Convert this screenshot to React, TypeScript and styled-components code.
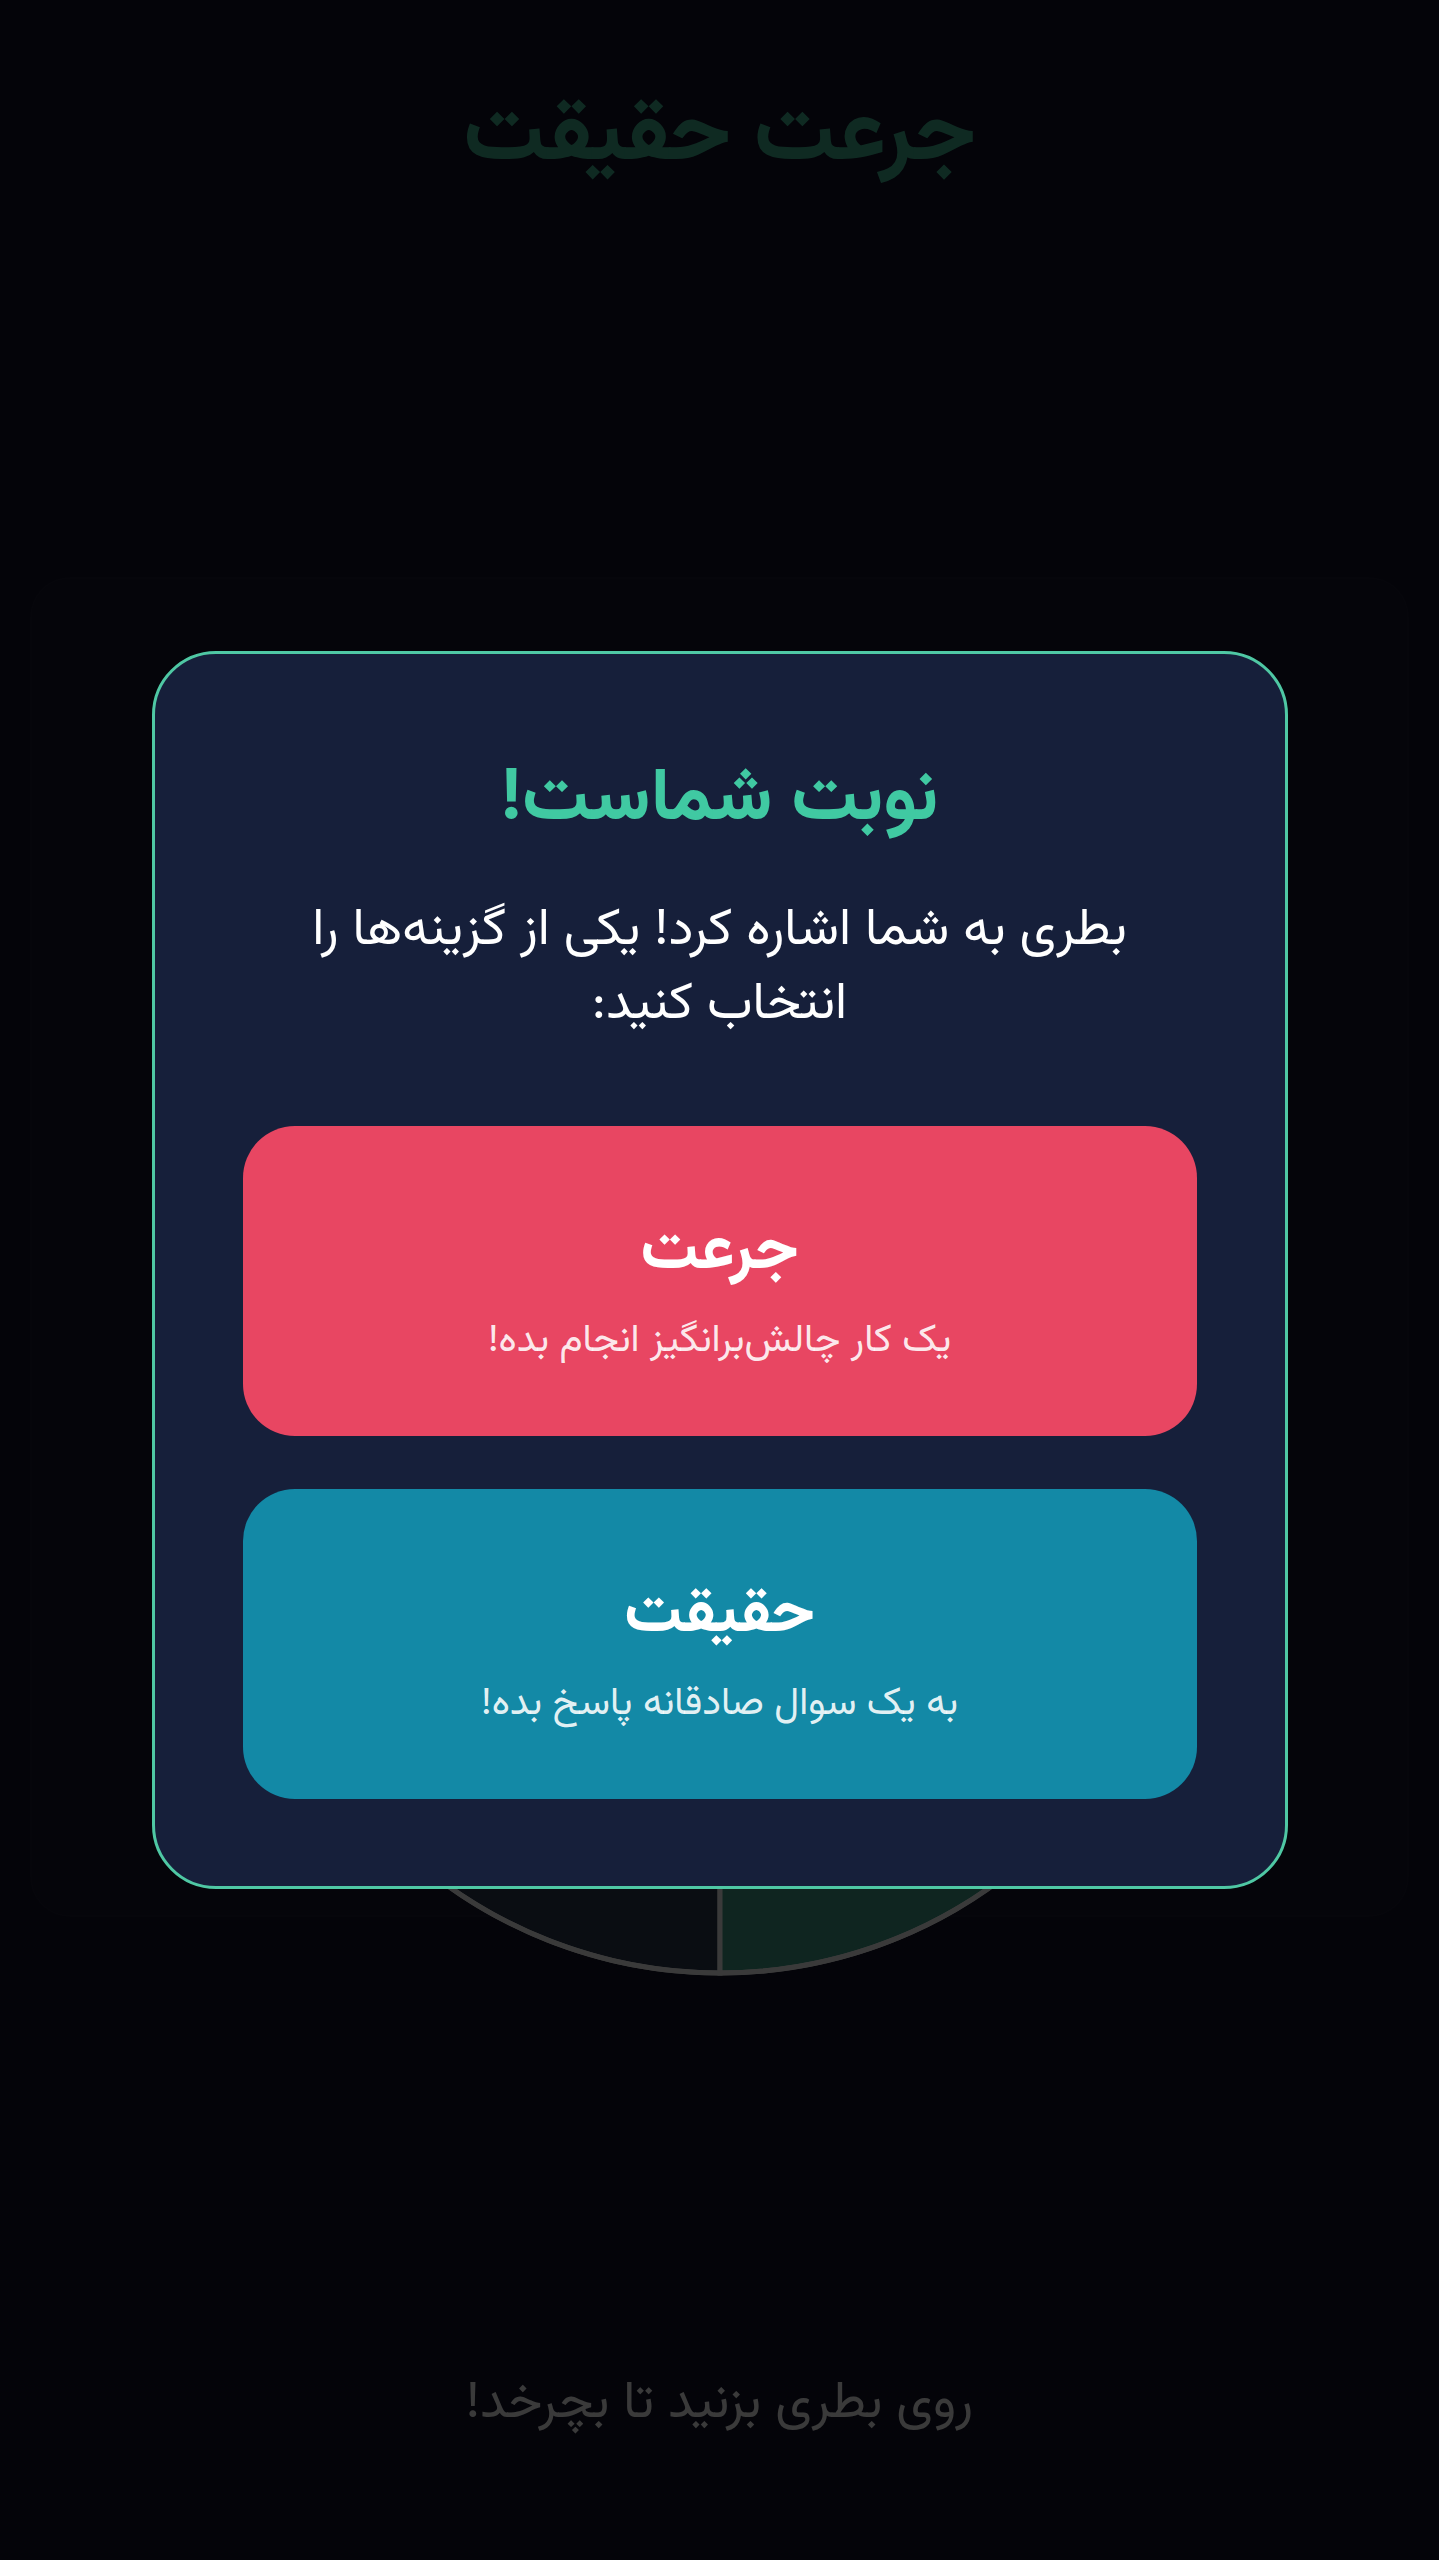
import styled, { createGlobalStyle } from "styled-components";

const GlobalStyle = createGlobalStyle`
  * { box-sizing: border-box; }
  html, body {
    margin: 0;
    padding: 0;
    background: #101024;
  }
  body {
    direction: rtl;
    font-family: "Vazirmatn", "Noto Sans Arabic", "Noto Sans", "DejaVu Sans", sans-serif;
  }
`;

const SLICES = 6;

function Wheel() {
  const r = 468;
  const c = 472;
  const paths = Array.from({ length: SLICES }, (_, i) => {
    const a0 = (i / SLICES) * Math.PI * 2 + Math.PI / 2;
    const a1 = ((i + 1) / SLICES) * Math.PI * 2 + Math.PI / 2;
    const x0 = c + r * Math.cos(a0);
    const y0 = c + r * Math.sin(a0);
    const x1 = c + r * Math.cos(a1);
    const y1 = c + r * Math.sin(a1);
    return (
      <path
        key={i}
        d={`M${c} ${c} L${x0} ${y0} A${r} ${r} 0 0 1 ${x1} ${y1} Z`}
        fill={i % 2 === 0 ? "#283448" : "#3c9480"}
        stroke="#e8e8e8"
        strokeWidth={5}
      />
    );
  });
  return (
    <WheelSvg viewBox="0 0 944 944" width={944} height={944}>
      {paths}
      <circle cx={c} cy={c} r={r} fill="none" stroke="#e8e8e8" strokeWidth={5} />
    </WheelSvg>
  );
}

export default function App() {
  return (
    <>
      <GlobalStyle />
      <Page>
        <Title>جرعت حقیقت</Title>
        <Stage>
          <Wheel />
        </Stage>
        <Hint>روی بطری بزنید تا بچرخد!</Hint>
      </Page>

      <Overlay>
        <Modal>
          <ModalTitle>نوبت شماست!</ModalTitle>
          <ModalText>بطری به شما اشاره کرد! یکی از گزینه‌ها را انتخاب کنید:</ModalText>
          <Choices>
            <Choice $tone="dare">
              <ChoiceTitle>جرعت</ChoiceTitle>
              <ChoiceText>یک کار چالش‌برانگیز انجام بده!</ChoiceText>
            </Choice>
            <Choice $tone="truth">
              <ChoiceTitle>حقیقت</ChoiceTitle>
              <ChoiceText>به یک سوال صادقانه پاسخ بده!</ChoiceText>
            </Choice>
          </Choices>
        </Modal>
      </Overlay>
    </>
  );
}

const Page = styled.div`
  height: 2560px;
  display: flex;
  flex-direction: column;
  align-items: center;
  padding: 70px 30px 0;
`;

const Title = styled.h1`
  margin: 0;
  font-size: 90px;
  line-height: 135px;
  font-weight: 700;
  color: #3ca888;
`;

const Stage = styled.div`
  margin-top: 372px;
  width: 100%;
  height: 1340px;
  flex-shrink: 0;
  border-radius: 40px;
  background: #141428;
  border: 2px solid rgba(255, 255, 255, 0.02);
  display: flex;
  justify-content: center;
  padding-top: 454px;
`;

const WheelSvg = styled.svg`
  flex-shrink: 0;
  display: block;
`;

const Hint = styled.p`
  margin: 449px 0 0;
  font-size: 52px;
  line-height: 1.5;
  color: #e8e8e8;
`;

const Overlay = styled.div`
  position: fixed;
  inset: 0;
  background: rgba(0, 0, 0, 0.75);
  display: flex;
  align-items: center;
  justify-content: center;
  padding-bottom: 20px;
`;

const Modal = styled.div`
  width: 1136px;
  background: #161f3a;
  border: 3px solid #4fc8a4;
  border-radius: 64px;
  padding: 95px 88px 87px;
  display: flex;
  flex-direction: column;
  align-items: center;
  text-align: center;
`;

const ModalTitle = styled.h2`
  margin: 0;
  font-size: 74px;
  line-height: 104px;
  font-weight: 700;
  color: #40c9a2;
`;

const ModalText = styled.p`
  margin: 42px 0 0;
  max-width: 900px;
  font-size: 52px;
  line-height: 74px;
  color: #ffffff;
`;

const Choices = styled.div`
  margin-top: 83px;
  width: 100%;
  display: flex;
  flex-direction: column;
  gap: 53px;
`;

const Choice = styled.button<{ $tone: "dare" | "truth" }>`
  width: 100%;
  height: 310px;
  border: none;
  border-radius: 52px;
  padding: 16px 0 0;
  background: ${(p) => (p.$tone === "dare" ? "#e84662" : "#1389a6")};
  color: #ffffff;
  font-family: inherit;
  display: flex;
  flex-direction: column;
  align-items: center;
  justify-content: center;
  gap: 16px;
  cursor: pointer;
`;

const ChoiceTitle = styled.span`
  font-size: 64px;
  line-height: 90px;
  font-weight: 700;
`;

const ChoiceText = styled.span`
  font-size: 39px;
  line-height: 58px;
  color: rgba(255, 255, 255, 0.9);
`;
